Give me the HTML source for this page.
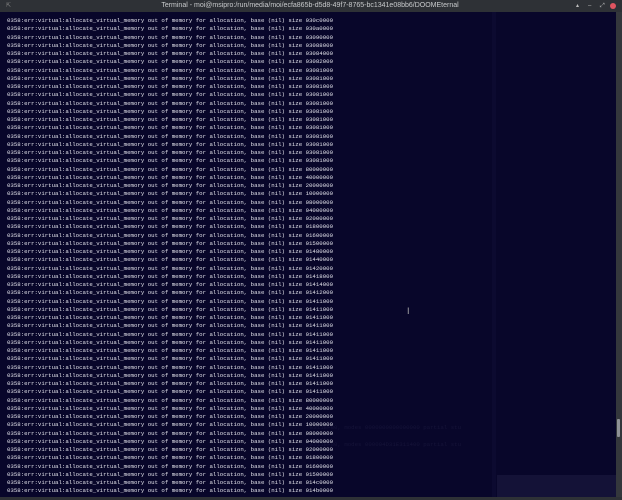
<!DOCTYPE html>
<html><head><meta charset="utf-8"><style>
html,body{margin:0;padding:0;width:622px;height:500px;overflow:hidden;background:#08062a;}
#title{position:absolute;left:0;top:0;width:622px;height:12px;background:#2e3136;color:#c8cacc;font:7px "Liberation Sans",sans-serif;line-height:12px;}
#title .t{position:absolute;left:160px;width:300px;text-align:center;top:0;white-space:nowrap;}
#term{position:absolute;left:7px;top:17px;font-family:"Liberation Mono",monospace;font-size:5.72px;line-height:8.25px;color:#e2e2ea;white-space:pre;}
#sb{position:absolute;left:616px;top:12px;width:6px;height:485px;background:#34373c;}
#thumb{position:absolute;left:617px;top:419px;width:3px;height:18px;background:#8f9297;border-radius:1px;}
#bot{position:absolute;left:0;top:497px;width:622px;height:3px;background:#2e3136;}
#sep{position:absolute;left:492px;top:12px;width:4px;height:485px;background:#0c0a30;}
#low{position:absolute;left:497px;top:475px;width:119px;height:22px;background:#141237;}
.ghost{position:absolute;font-family:"Liberation Mono",monospace;font-size:5.72px;color:#161439;white-space:pre;}
</style></head><body>
<div id="title"><span style="position:absolute;left:6px;top:0;font-size:6px;color:#888">⇱</span><div class="t">Terminal - moi@msipro:/run/media/moi/ecfa865b-d5d8-49f7-8765-bc1341e08bb6/DOOMEternal</div>
<span style="position:absolute;left:576px;top:0;color:#bbb;font-size:6px">▴</span>
<span style="position:absolute;left:588px;top:0;color:#bbb;font-size:6px">–</span>
<span style="position:absolute;left:600px;top:0;color:#bbb;font-size:6px">⤢</span>
<span style="position:absolute;left:610px;top:3px;width:6px;height:6px;border-radius:50%;background:#e05460;"></span></div>
<div id="sep"></div><div id="low"></div>
<div class="ghost" style="left:310px;top:424px">E311EF80, modes 0000000000000000 partial stu</div>
<div class="ghost" style="left:310px;top:441px">E311EF80, modes 000004D31E311400 partial stu</div>
<div id="term">0358:err:virtual:allocate_virtual_memory out of memory for allocation, base (nil) size 030c0000
0358:err:virtual:allocate_virtual_memory out of memory for allocation, base (nil) size 030a0000
0358:err:virtual:allocate_virtual_memory out of memory for allocation, base (nil) size 03090000
0358:err:virtual:allocate_virtual_memory out of memory for allocation, base (nil) size 03088000
0358:err:virtual:allocate_virtual_memory out of memory for allocation, base (nil) size 03084000
0358:err:virtual:allocate_virtual_memory out of memory for allocation, base (nil) size 03082000
0358:err:virtual:allocate_virtual_memory out of memory for allocation, base (nil) size 03081000
0358:err:virtual:allocate_virtual_memory out of memory for allocation, base (nil) size 03081000
0358:err:virtual:allocate_virtual_memory out of memory for allocation, base (nil) size 03081000
0358:err:virtual:allocate_virtual_memory out of memory for allocation, base (nil) size 03081000
0358:err:virtual:allocate_virtual_memory out of memory for allocation, base (nil) size 03081000
0358:err:virtual:allocate_virtual_memory out of memory for allocation, base (nil) size 03081000
0358:err:virtual:allocate_virtual_memory out of memory for allocation, base (nil) size 03081000
0358:err:virtual:allocate_virtual_memory out of memory for allocation, base (nil) size 03081000
0358:err:virtual:allocate_virtual_memory out of memory for allocation, base (nil) size 03081000
0358:err:virtual:allocate_virtual_memory out of memory for allocation, base (nil) size 03081000
0358:err:virtual:allocate_virtual_memory out of memory for allocation, base (nil) size 03081000
0358:err:virtual:allocate_virtual_memory out of memory for allocation, base (nil) size 03081000
0358:err:virtual:allocate_virtual_memory out of memory for allocation, base (nil) size 80000000
0358:err:virtual:allocate_virtual_memory out of memory for allocation, base (nil) size 40000000
0358:err:virtual:allocate_virtual_memory out of memory for allocation, base (nil) size 20000000
0358:err:virtual:allocate_virtual_memory out of memory for allocation, base (nil) size 10000000
0358:err:virtual:allocate_virtual_memory out of memory for allocation, base (nil) size 08000000
0358:err:virtual:allocate_virtual_memory out of memory for allocation, base (nil) size 04000000
0358:err:virtual:allocate_virtual_memory out of memory for allocation, base (nil) size 02000000
0358:err:virtual:allocate_virtual_memory out of memory for allocation, base (nil) size 01800000
0358:err:virtual:allocate_virtual_memory out of memory for allocation, base (nil) size 01600000
0358:err:virtual:allocate_virtual_memory out of memory for allocation, base (nil) size 01500000
0358:err:virtual:allocate_virtual_memory out of memory for allocation, base (nil) size 01480000
0358:err:virtual:allocate_virtual_memory out of memory for allocation, base (nil) size 01440000
0358:err:virtual:allocate_virtual_memory out of memory for allocation, base (nil) size 01420000
0358:err:virtual:allocate_virtual_memory out of memory for allocation, base (nil) size 01418000
0358:err:virtual:allocate_virtual_memory out of memory for allocation, base (nil) size 01414000
0358:err:virtual:allocate_virtual_memory out of memory for allocation, base (nil) size 01412000
0358:err:virtual:allocate_virtual_memory out of memory for allocation, base (nil) size 01411000
0358:err:virtual:allocate_virtual_memory out of memory for allocation, base (nil) size 01411000
0358:err:virtual:allocate_virtual_memory out of memory for allocation, base (nil) size 01411000
0358:err:virtual:allocate_virtual_memory out of memory for allocation, base (nil) size 01411000
0358:err:virtual:allocate_virtual_memory out of memory for allocation, base (nil) size 01411000
0358:err:virtual:allocate_virtual_memory out of memory for allocation, base (nil) size 01411000
0358:err:virtual:allocate_virtual_memory out of memory for allocation, base (nil) size 01411000
0358:err:virtual:allocate_virtual_memory out of memory for allocation, base (nil) size 01411000
0358:err:virtual:allocate_virtual_memory out of memory for allocation, base (nil) size 01411000
0358:err:virtual:allocate_virtual_memory out of memory for allocation, base (nil) size 01411000
0358:err:virtual:allocate_virtual_memory out of memory for allocation, base (nil) size 01411000
0358:err:virtual:allocate_virtual_memory out of memory for allocation, base (nil) size 01411000
0358:err:virtual:allocate_virtual_memory out of memory for allocation, base (nil) size 80000000
0358:err:virtual:allocate_virtual_memory out of memory for allocation, base (nil) size 40000000
0358:err:virtual:allocate_virtual_memory out of memory for allocation, base (nil) size 20000000
0358:err:virtual:allocate_virtual_memory out of memory for allocation, base (nil) size 10000000
0358:err:virtual:allocate_virtual_memory out of memory for allocation, base (nil) size 08000000
0358:err:virtual:allocate_virtual_memory out of memory for allocation, base (nil) size 04000000
0358:err:virtual:allocate_virtual_memory out of memory for allocation, base (nil) size 02000000
0358:err:virtual:allocate_virtual_memory out of memory for allocation, base (nil) size 01800000
0358:err:virtual:allocate_virtual_memory out of memory for allocation, base (nil) size 01600000
0358:err:virtual:allocate_virtual_memory out of memory for allocation, base (nil) size 01500000
0358:err:virtual:allocate_virtual_memory out of memory for allocation, base (nil) size 014c0000
0358:err:virtual:allocate_virtual_memory out of memory for allocation, base (nil) size 014b0000</div>
<span style="position:absolute;left:407px;top:306px;color:#aaa;font:9px 'Liberation Sans',sans-serif">I</span>
<div id="sb"></div><div id="thumb"></div><div id="bot"></div>
</body></html>
